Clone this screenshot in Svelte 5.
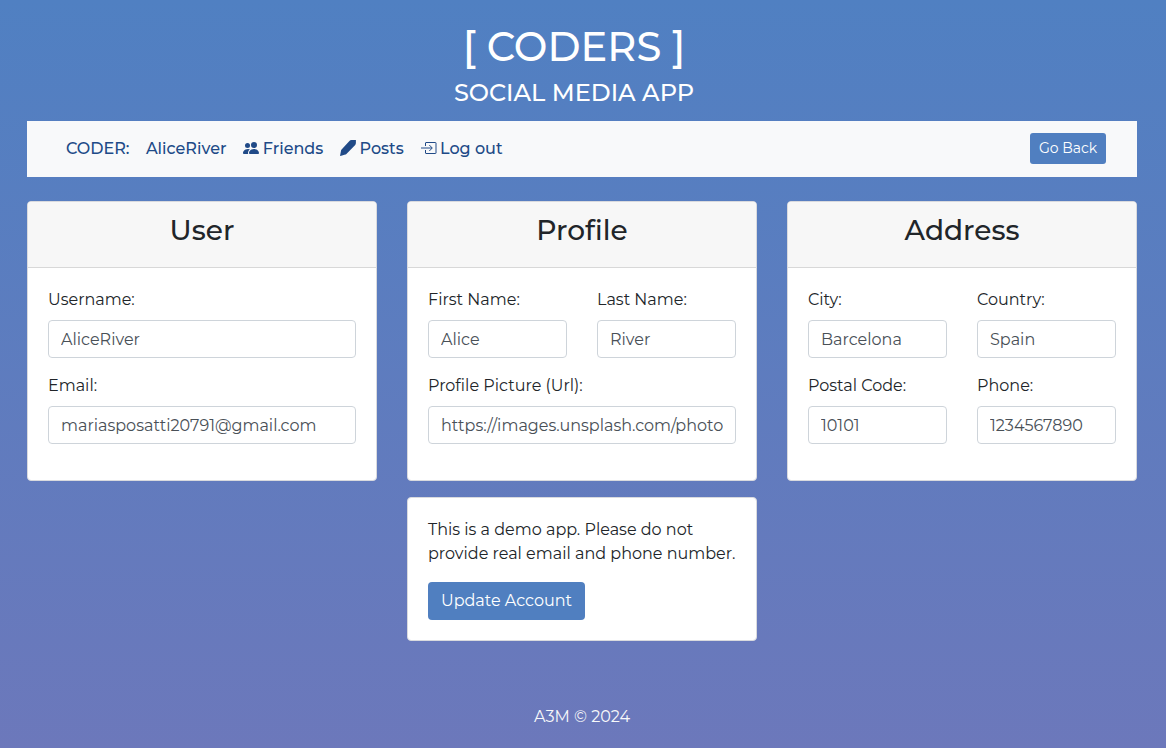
<script>
  const nav = [
    { text: 'AliceRiver' },
    { text: 'Friends', icon: 'people' },
    { text: 'Posts', icon: 'pen' },
    { text: 'Log out', icon: 'exit' }
  ];

  const cards = [
    {
      title: 'User',
      fields: [
        { label: 'Username:', value: 'AliceRiver', wide: true },
        { label: 'Email:', value: 'mariasposatti20791@gmail.com', wide: true }
      ]
    },
    {
      title: 'Profile',
      fields: [
        { label: 'First Name:', value: 'Alice' },
        { label: 'Last Name:', value: 'River' },
        { label: 'Profile Picture (Url):', value: 'https://images.unsplash.com/photo', wide: true }
      ]
    },
    {
      title: 'Address',
      fields: [
        { label: 'City:', value: 'Barcelona' },
        { label: 'Country:', value: 'Spain' },
        { label: 'Postal Code:', value: '10101' },
        { label: 'Phone:', value: '1234567890' }
      ]
    }
  ];
</script>

<div class="page">
  <header>
    <h1>[ CODERS ]</h1>
    <h2>SOCIAL MEDIA APP</h2>
  </header>

  <nav>
    <span class="brand">CODER:</span>
    {#each nav as item}
      <a href="#top">
        {#if item.icon === 'people'}
          <svg viewBox="0 0 16 16"><path d="M7 14s-1 0-1-1 1-4 5-4 5 3 5 4-1 1-1 1H7zm4-6a3 3 0 1 0 0-6 3 3 0 0 0 0 6z" /><path d="M5.216 14A2.238 2.238 0 0 1 5 13c0-1.355.68-2.75 1.936-3.72A6.325 6.325 0 0 0 5 9c-4 0-5 3-5 4s1 1 1 1h4.216z" /><path d="M4.5 8a2.5 2.5 0 1 0 0-5 2.5 2.5 0 0 0 0 5z" /></svg>
        {:else if item.icon === 'pen'}
          <svg viewBox="0 0 16 16"><path d="M9.200 1.200Q10.200.1 11.500.1H15.900V2.800Q15.900 4 15.200 4.900L6.400 14Q5.900 14.500 5.300 14.600L1.200 15.700.2 16Q0 15.900.1 15.500L1 10.800Q1.100 10.100 1.600 9.500Z" /></svg>
        {:else if item.icon === 'exit'}
          <svg viewBox="0 0 16 16" class="exit"><path d="M4.500 6V3a.5.5 0 0 1 .5-.5h9.500a.5.5 0 0 1 .5.5v10a.5.5 0 0 1-.5.500h-9.500a.5.5 0 0 1-.5-.5v-3M0 8h11M8.300 5 11.300 8l-3 3" /></svg>
        {/if}
        <span>{item.text}</span>
      </a>
    {/each}
    <button class="small">Go Back</button>
  </nav>

  <main>
    {#each cards as card}
      <section class="card">
        <h3>{card.title}</h3>
        <div class="fields">
          {#each card.fields as f}
            <label class:wide={f.wide}>
              <span>{f.label}</span>
              <input value={f.value} />
            </label>
          {/each}
        </div>
      </section>
    {/each}
    <section class="card note">
      <p>This is a demo app. Please do not provide real email and phone number.</p>
      <button>Update Account</button>
    </section>
  </main>

  <footer>A3M © 2024</footer>
</div>

<style>
  :global(body) { margin: 0; }
  .page, .page * { box-sizing: border-box; }
  .page {
    height: 748px;
    overflow: hidden;
    padding: 0 29px 0 27px;
    background: linear-gradient(#5080c2, #6c78bb);
    color: #212529;
    font: 400 16px/24px Montserrat, Inter, sans-serif;
  }
  header { height: 121px; padding: 23px 16px 0 0; text-align: center; color: #fff; }
  h1, h2, h3, p { margin: 0; font-weight: 500; }
  h1 { font-size: 40px; line-height: 48px; }
  h2 { margin-top: 8px; font-size: 24px; line-height: 28px; }
  nav {
    display: flex;
    align-items: center;
    gap: 16px;
    height: 56px;
    padding: 0 31px 0 39px;
    background: #f8f9fa;
    color: #204a87;
    font-weight: 500;
  }
  .brand { margin-right: 0.4px; }
  a { display: flex; align-items: center; color: inherit; text-decoration: none; }
  svg { width: 16px; height: 16px; margin: 0 3.7px 2px 0.6px; fill: currentColor; }
  .exit { margin: 0 3.3px 3px 1px; fill: none; stroke: currentColor; }
  button {
    height: 38px;
    padding: 0 13px;
    border: 0;
    border-radius: 4px;
    background: #507fc0;
    color: #fff;
    font: 400 16px/24px Montserrat, Inter, sans-serif;
  }
  button.small { height: 31px; width: 76px; padding: 0; margin: 0 0 2px auto; border-radius: 3px; font-size: 14px; }
  main {
    display: grid;
    grid-template-columns: repeat(3, 350px);
    gap: 16px 30px;
    margin-top: 24px;
  }
  .card {
    height: 280px;
    border: 1px solid #d9dade;
    border-radius: 4px;
    background: #fff;
    overflow: hidden;
  }
  h3 {
    height: 66px;
    padding-top: 11px;
    border-bottom: 1px solid #d8d8d8;
    background: #f7f7f7;
    text-align: center;
    font-size: 28px;
    line-height: 34px;
  }
  .fields { display: grid; grid-template-columns: 1fr 1fr; gap: 16px 30px; padding: 20px; }
  label { display: flex; flex-direction: column; align-items: flex-start; gap: 8px; height: 70px; }
  .wide { grid-column: span 2; }
  input {
    width: 100%;
    height: 38px;
    padding: 6px 12px;
    border: 1px solid #ced4da;
    border-radius: 4px;
    background: #fff;
    color: #495057;
    font: inherit;
  }
  .note { grid-column: 2; height: 144px; padding: 20px; }
  p { font-weight: 400; }
  .note button { margin-top: 16px; }
  footer { margin-top: 64px; text-align: center; color: #f8f9fa; }
</style>
